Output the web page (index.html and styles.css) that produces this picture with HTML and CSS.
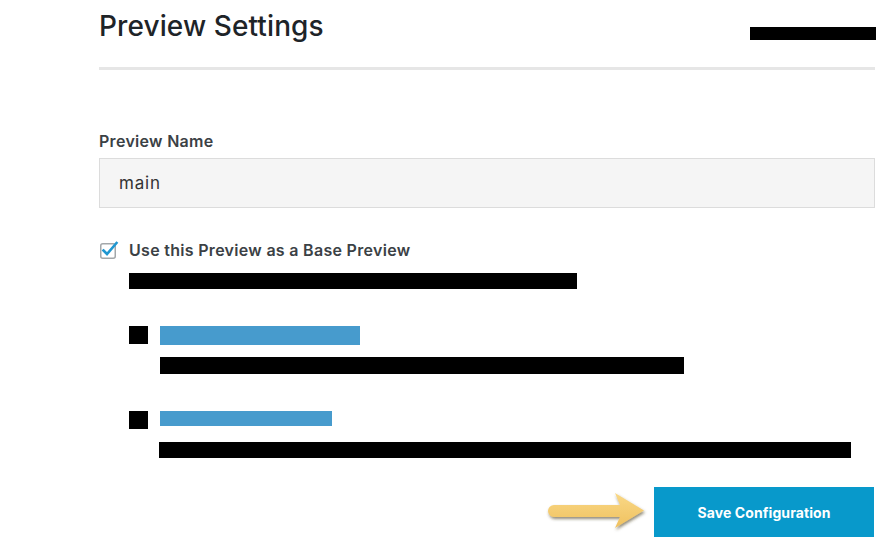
FILE: index.html
```html
<!DOCTYPE html>
<html lang="en">
<head>
<meta charset="utf-8">
<title>Preview Settings</title>
<link rel="stylesheet" href="styles.css">
</head>
<body>
<div class="page">
  <header class="head">
    <h1 class="title">Preview Settings</h1>
    <span class="redact head-redact"></span>
  </header>
  <hr class="rule">

  <label class="field-label" for="pname">Preview Name</label>
  <div class="input" id="pname">main</div>

  <label class="check-row">
    <svg class="checkbox" width="20" height="20" viewBox="0 0 20 20" aria-hidden="true">
      <rect x="1.75" y="3.75" width="14.5" height="14.5" rx="2" fill="#fff" stroke="#a3a7aa" stroke-width="1.5"/>
      <path d="M4.5 10.5 L8 14 L17.5 3" fill="none" stroke="#1f97d1" stroke-width="2.6" stroke-linecap="square" stroke-linejoin="miter"/>
    </svg>
    <span class="check-text">Use this Preview as a Base Preview</span>
  </label>
  <div class="redact desc-redact"></div>

  <ul class="options">
    <li class="option">
      <span class="redact opt-square"></span>
      <div class="opt-body">
        <span class="link-redact link-1"></span>
        <span class="redact opt-text-1"></span>
      </div>
    </li>
    <li class="option option-2">
      <span class="redact opt-square"></span>
      <div class="opt-body">
        <span class="link-redact link-2"></span>
        <span class="redact opt-text-2"></span>
      </div>
    </li>
  </ul>

  <div class="actions">
    <svg class="arrow" width="104" height="44" viewBox="0 0 104 44" aria-hidden="true">
      <defs>
        <linearGradient id="ag" x1="0" y1="0" x2="0" y2="1">
          <stop offset="0" stop-color="#f9d886"/>
          <stop offset="1" stop-color="#f0c15f"/>
        </linearGradient>
        <filter id="sh" x="-10%" y="-20%" width="130%" height="160%">
          <feDropShadow dx="1" dy="2" stdDeviation="1.4" flood-color="#4a3d22" flood-opacity="0.6"/>
        </filter>
      </defs>
      <path d="M8 15 L74 15 L69 3 L98 20.5 L69 38 L74 27 L8 27 A6 6 0 0 1 8 15 Z" fill="url(#ag)" filter="url(#sh)"/>
    </svg>
    <button class="btn" type="button">Save Configuration</button>
  </div>
</div>
</body>
</html>
```
FILE: styles.css
```css
* { box-sizing: border-box; }

body {
  margin: 0;
  background: #ffffff;
  font-family: Inter, "Open Sans", "Liberation Sans", sans-serif;
  color: #3b4145;
}

.page {
  width: 888px;
  padding: 0 13px 0 99px;
}

.head {
  display: flex;
  justify-content: space-between;
  align-items: flex-start;
  height: 67px;
}

.title {
  margin: 0;
  padding-top: 10px;
  font-size: 28px;
  line-height: 32px;
  font-weight: 500;
  color: #1e2428;
  letter-spacing: 0.1px;
}

.redact { display: block; background: #000; }

.head-redact {
  width: 126px;
  height: 13px;
  margin-top: 27px;
  margin-right: -1px;
}

.rule {
  margin: 0;
  border: 0;
  height: 3px;
  background: #e6e6e6;
}

.field-label {
  display: block;
  margin-top: 61px;
  font-size: 16px;
  line-height: 20px;
  font-weight: 600;
  letter-spacing: 0.3px;
  color: #3b4145;
}

.input {
  margin-top: 7px;
  height: 50px;
  border: 1px solid #dcdcdc;
  background: #f5f5f5;
  padding: 0 0 0 19px;
  display: flex;
  align-items: center;
  font-size: 17px;
  letter-spacing: 0.8px;
  color: #333;
}

.check-row {
  margin-top: 32px;
  display: flex;
  align-items: center;
  gap: 10px;
  height: 20px;
}

.checkbox { display: block; flex: none; }

.check-text {
  font-size: 16px;
  line-height: 20px;
  font-weight: 600;
  letter-spacing: 0.3px;
  color: #3b4145;
}

.desc-redact {
  margin: 13px 0 0 30px;
  width: 448px;
  height: 16px;
}

.options {
  list-style: none;
  margin: 37px 0 0 30px;
  padding: 0;
}

.option {
  display: flex;
  gap: 12px;
  align-items: flex-start;
}

.option-2 { margin-top: 37px; }

.opt-square {
  width: 19px;
  height: 18px;
  flex: none;
}

.opt-body {
  display: flex;
  flex-direction: column;
}

.link-redact { display: block; background: #479bcd; }

.link-1 { width: 200px; height: 19px; }
.link-2 { width: 172px; height: 15px; }

.opt-text-1 { width: 524px; height: 17px; margin-top: 12px; }
.opt-text-2 { width: 692px; height: 16px; margin-top: 16px; margin-left: -1px; }

.actions {
  margin-top: 29px;
  margin-right: 1px;
  display: flex;
  justify-content: flex-end;
  align-items: center;
  gap: 4px;
}

.arrow { display: block; }

.btn {
  width: 220px;
  height: 50px;
  border: 0;
  border-radius: 0;
  background: #0899cb;
  color: #fff;
  font-family: Inter, "Open Sans", "Liberation Sans", sans-serif;
  font-size: 14px;
  font-weight: 700;
  letter-spacing: 0.1px;
  padding: 0;
}
```
